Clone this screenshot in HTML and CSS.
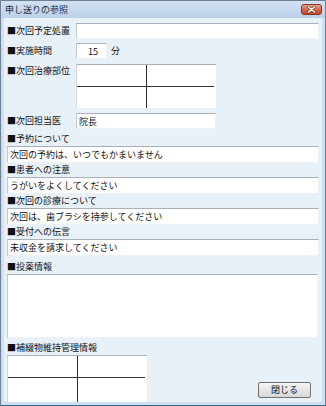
FILE: index.html
```html
<!DOCTYPE html>
<html lang="ja">
<head>
    <meta charset="UTF-8">
    <title>申し送りの参照</title>
    <link rel="stylesheet" href="styles.css">
</head>
<body>
    <div class="window">
        <div class="titlebar">
            <span class="title">申し送りの参照</span>
            <span class="close">
                <svg width="9" height="7" viewBox="0 0 9 7">
                    <path d="M1.5 1 L7.5 6 M7.5 1 L1.5 6" stroke="#7a2a1c" stroke-width="2.6" stroke-linecap="round"/>
                    <path d="M1.5 1 L7.5 6 M7.5 1 L1.5 6" stroke="#fff" stroke-width="1.6" stroke-linecap="round"/>
                </svg>
            </span>
        </div>
        <div class="client">
            <div class="row r1">
                <span class="label">■次回予定処置</span>
                <input type="text" class="field wide">
            </div>
            <div class="row r2">
                <span class="label">■実施時間</span>
                <input type="text" class="field num" value="15">
                <span class="unit">分</span>
            </div>
            <div class="row top r3">
                <span class="label">■次回治療部位</span>
                <div class="teeth">
                    <div></div><div></div><div></div><div></div>
                </div>
            </div>
            <div class="row r4">
                <span class="label">■次回担当医</span>
                <input type="text" class="field mid" value="院長">
            </div>

            <div class="block first">
                <div class="caption">■予約について</div>
                <input type="text" class="field full" value="次回の予約は、いつでもかまいません">
            </div>
            <div class="block">
                <div class="caption">■患者への注意</div>
                <input type="text" class="field full" value="うがいをよくしてください">
            </div>
            <div class="block">
                <div class="caption">■次回の診療について</div>
                <input type="text" class="field full" value="次回は、歯ブラシを持参してください">
            </div>
            <div class="block">
                <div class="caption">■受付への伝言</div>
                <input type="text" class="field full" value="未収金を請求してください">
            </div>

            <div class="block memo-block">
                <div class="caption">■投薬情報</div>
                <textarea class="memo"></textarea>
            </div>

            <div class="bottom">
                <div class="block">
                    <div class="caption">■補綴物維持管理情報</div>
                    <div class="teeth tall">
                        <div></div><div></div><div></div><div></div>
                    </div>
                </div>
                <button class="btn">閉じる</button>
            </div>
        </div>
    </div>
</body>
</html>
```

FILE: styles.css
```css
* {
    box-sizing: border-box;
}
body {
    margin: 0;
    font-family: "Noto Sans CJK JP", "Noto Sans", sans-serif;
    font-size: 9px;
    color: #111;
}
.window {
    width: 326px;
    height: 406px;
    border: 1px solid #6f8093;
    border-bottom-color: #2c6a86;
    background: #cddff1;
    padding: 0 3px 3px 3px;
    display: flex;
    flex-direction: column;
}
.titlebar {
    height: 17px;
    margin: 0 -3px;
    padding: 0 3px 0 4px;
    background: linear-gradient(#d2e1f3, #bcd0e9);
    display: flex;
    align-items: center;
    justify-content: space-between;
}
.title {
    font-size: 9px;
    line-height: 12px;
    color: #1b2a3c;
}
.close {
    width: 21px;
    height: 11px;
    border: 1px solid #8c3424;
    border-radius: 3px;
    background: linear-gradient(#e9a08c, #d06a52 50%, #c0452e);
    display: flex;
    align-items: center;
    justify-content: center;
}
.close svg {
    display: block;
}
.client {
    flex: 1;
    background: #e8f0f8;
    padding: 5px 3px 0 3px;
    border-left: 1px solid #d9e2ec;
    margin-left: -1px;
    overflow: hidden;
}
.row {
    display: flex;
    align-items: center;
}
.row.top {
    align-items: flex-start;
}
.r2 { margin-top: 4px; }
.r3 { margin-top: 5px; }
.r4 { margin-top: 5px; }
.label {
    width: 69px;
    flex-shrink: 0;
    line-height: 14px;
    white-space: nowrap;
}
.field {
    height: 16px;
    padding: 0 2px;
    border: 1px solid;
    border-color: #a9b0b8 #eef2f6 #eef2f6 #c3c9cf;
    background: #fff;
    font-family: inherit;
    font-size: 9px;
    color: #111;
    outline: none;
}
.wide { width: 243px; }
.num {
    width: 31px;
    text-align: right;
    padding-right: 8px;
}
.unit {
    margin-left: 4px;
    line-height: 14px;
}
.mid { width: 140px; }
.full {
    width: 312px;
    height: 17px;
}
.block.first { margin-top: 3px; }
.caption {
    line-height: 14px;
    white-space: nowrap;
}
.teeth {
    width: 140px;
    height: 44px;
    display: grid;
    grid-template-columns: 70px 1fr;
    grid-template-rows: 22px 1fr;
    border-top: 1px solid #a9b0b8;
    border-left: 1px solid #d0d5da;
    background: #fff;
}
.teeth div:nth-child(1) {
    border-right: 1px solid #333;
    border-bottom: 1px solid #333;
}
.teeth div:nth-child(2) {
    border-bottom: 1px solid #333;
    margin-right: 2px;
}
.teeth div:nth-child(3) {
    border-right: 1px solid #333;
}
.teeth.tall {
    height: 47px;
}
.memo-block {
    margin-top: 4px;
}
.memo {
    display: block;
    width: 311px;
    height: 64px;
    resize: none;
    border: 1px solid;
    border-color: #a9b0b8 #eef2f6 #eef2f6 #c3c9cf;
    background: #fff;
    outline: none;
}
.bottom {
    margin-top: 3px;
    display: flex;
    justify-content: space-between;
    align-items: flex-end;
}
.btn {
    width: 53px;
    height: 16px;
    margin: 0 8px 4px 0;
    padding: 0;
    border: 1px solid #707070;
    border-radius: 2px;
    background: linear-gradient(#f4f4f4, #e6e6e6 50%, #d8d8d8);
    font-family: inherit;
    font-size: 9px;
    line-height: 12px;
    color: #111;
}
```
